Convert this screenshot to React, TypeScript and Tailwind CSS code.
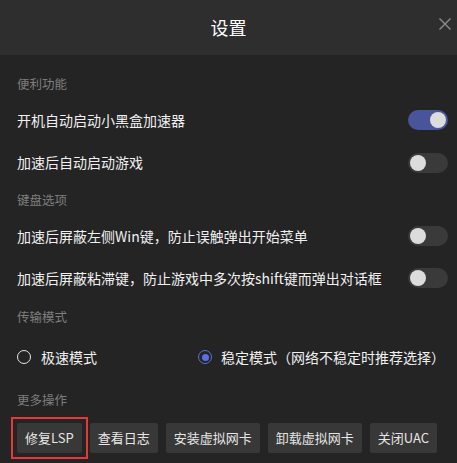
import React, { useState } from "react";

function Toggle({ on }: { on: boolean }) {
  return (
    <div
      className={`w-[40px] h-[20px] rounded-full flex items-center px-[2px] ${
        on ? "bg-[#4a549b] justify-end" : "bg-[#3a3a3a] justify-start"
      }`}
    >
      <div className="w-[16px] h-[16px] rounded-full bg-[#dcdcdc]" />
    </div>
  );
}

function Radio({ checked }: { checked: boolean }) {
  return checked ? (
    <div className="w-[14px] h-[14px] rounded-full border-[1.5px] border-[#5b6ee6] flex items-center justify-center">
      <div className="w-[7px] h-[7px] rounded-full bg-[#5b6ee6]" />
    </div>
  ) : (
    <div className="w-[14px] h-[14px] rounded-full border-[1.5px] border-[#e6e6e6]" />
  );
}

const rowsA = [
  { label: "开机自动启动小黑盒加速器", on: true, h: "h-[42px]" },
  { label: "加速后自动启动游戏", on: false, h: "h-[43px]" },
];

const rowsB = [
  { label: "加速后屏蔽左侧Win键，防止误触弹出开始菜单", on: false, h: "h-[40px]" },
  { label: "加速后屏蔽粘滞键，防止游戏中多次按shift键而弹出对话框", on: false, h: "h-[44px]" },
];

const actions = ["修复LSP", "查看日志", "安装虚拟网卡", "卸载虚拟网卡", "关闭UAC"];

export default function App() {
  const [mode] = useState("stable");

  return (
    <div className="w-[457px] h-[463px] overflow-hidden bg-[#242424] font-['Noto_Sans_CJK_SC',sans-serif]">
      {/* Header */}
      <div className="relative h-[55px] bg-[#2e2e2e] flex items-center justify-center">
        <span className="text-[18px] text-white">设置</span>
        <svg
          className="absolute right-[6px] top-[18px]"
          width="12"
          height="12"
          viewBox="0 0 12 12"
        >
          <path d="M0.5 0.5L11.5 11.5M11.5 0.5L0.5 11.5" stroke="#8c8c8c" strokeWidth="1.4" />
        </svg>
      </div>

      <div className="px-[17px] pt-[14px] pr-[9px]">
        <div className="h-[30px] flex items-center text-[12.5px] text-[#7e7e7e]">便利功能</div>
        {rowsA.map((r) => (
          <div key={r.label} className={`${r.h} flex items-center justify-between`}>
            <span className="text-[14px] text-[#f0f0f0]">{r.label}</span>
            <Toggle on={r.on} />
          </div>
        ))}

        <div className="h-[32px] flex items-center text-[12.5px] text-[#7e7e7e]">键盘选项</div>
        {rowsB.map((r) => (
          <div key={r.label} className={`${r.h} flex items-center justify-between`}>
            <span className="text-[14px] text-[#f0f0f0]">{r.label}</span>
            <Toggle on={r.on} />
          </div>
        ))}

        <div className="h-[34px] flex items-center text-[12.5px] text-[#7e7e7e]">传输模式</div>
        <div className="h-[46px] flex items-center text-[14px] text-[#f0f0f0]">
          <div className="w-[181px] flex items-center gap-[10px]">
            <Radio checked={mode === "fast"} />
            <span>极速模式</span>
          </div>
          <div className="flex items-center gap-[9px]">
            <Radio checked={mode === "stable"} />
            <span>稳定模式（网络不稳定时推荐选择）</span>
          </div>
        </div>

        <div className="h-[40px] flex items-center text-[12.5px] text-[#7e7e7e]">更多操作</div>
        <div className="pt-[3px] flex gap-[8px]">
          {actions.map((a, i) => (
            <button
              key={a}
              className="relative h-[30px] px-[8px] rounded-[2px] bg-[#383838] text-[13px] text-[#e6e6e6]"
            >
              {a}
              {i === 0 && (
                <span className="absolute -inset-[6px] border-2 border-[#e23a3a] pointer-events-none" />
              )}
            </button>
          ))}
        </div>
      </div>
    </div>
  );
}
